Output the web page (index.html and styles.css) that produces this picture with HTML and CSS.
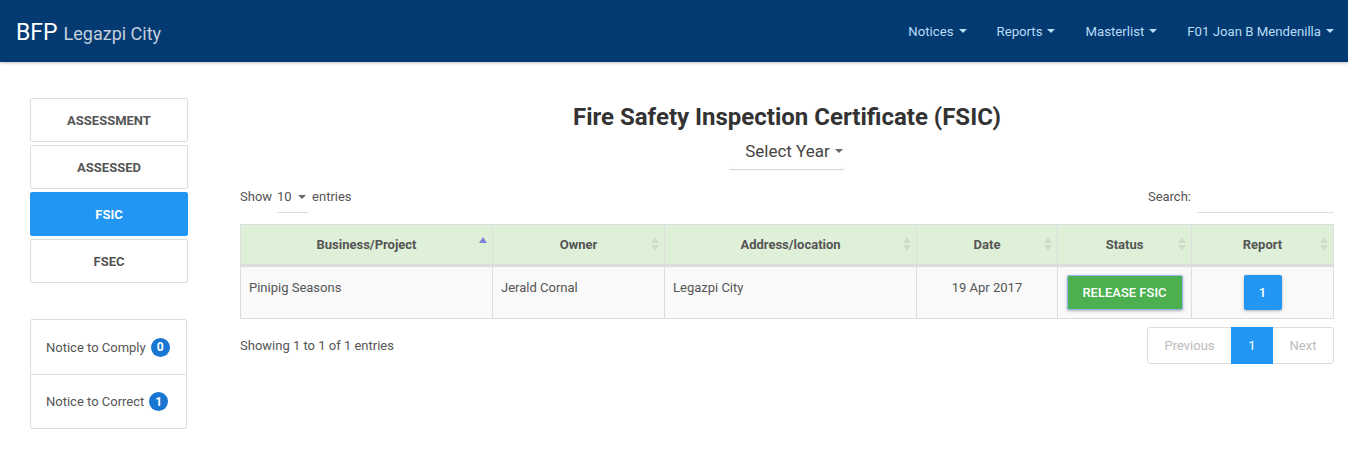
FILE: index.html
```html
<!DOCTYPE html>
<html>
<head>
<meta charset="utf-8">
<link rel="stylesheet" href="styles.css">
</head>
<body>
<nav class="navbar">
  <div class="brand"><span class="brand-main">BFP</span> <span class="brand-sub">Legazpi City</span></div>
  <ul class="nav-menu">
    <li>Notices <span class="caret"></span></li>
    <li>Reports <span class="caret"></span></li>
    <li>Masterlist <span class="caret"></span></li>
    <li>F01 Joan B Mendenilla <span class="caret"></span></li>
  </ul>
</nav>
<div class="layout">
  <aside class="sidebar">
    <div class="tabs">
      <div class="tab">ASSESSMENT</div>
      <div class="tab">ASSESSED</div>
      <div class="tab active">FSIC</div>
      <div class="tab">FSEC</div>
    </div>
    <div class="notices">
      <div class="notice">Notice to Comply <span class="badge">0</span></div>
      <div class="notice">Notice to Correct <span class="badge">1</span></div>
    </div>
  </aside>
  <main class="content">
    <h1 class="title">Fire Safety Inspection Certificate (FSIC)</h1>
    <div class="year-wrap"><div class="year">Select Year <span class="caret dark"></span></div></div>
    <div class="controls">
      <div class="length">Show <span class="select">10 <span class="caret dark small"></span></span> entries</div>
      <div class="search">Search: <span class="search-input"></span></div>
    </div>
    <table class="table">
      <thead>
        <tr>
          <th class="c1">Business/Project<span class="sort asc"></span></th>
          <th class="c2">Owner<span class="sort"></span></th>
          <th class="c3">Address/location<span class="sort"></span></th>
          <th class="c4">Date<span class="sort"></span></th>
          <th class="c5">Status<span class="sort"></span></th>
          <th class="c6">Report<span class="sort"></span></th>
        </tr>
      </thead>
      <tbody>
        <tr>
          <td>Pinipig Seasons</td>
          <td>Jerald Cornal</td>
          <td>Legazpi City</td>
          <td class="center">19 Apr 2017</td>
          <td class="center"><span class="btn green">RELEASE FSIC</span></td>
          <td class="center"><span class="btn blue">1</span></td>
        </tr>
      </tbody>
    </table>
    <div class="footer">
      <div class="info">Showing 1 to 1 of 1 entries</div>
      <div class="pager">
        <span class="pg disabled">Previous</span>
        <span class="pg current">1</span>
        <span class="pg disabled">Next</span>
      </div>
    </div>
  </main>
</div>
</body>
</html>
```
FILE: styles.css
```css
* { box-sizing: border-box; }
body {
  margin: 0;
  font-family: Roboto, "Noto Sans", sans-serif;
  color: #555;
  background: #fff;
}
.navbar {
  height: 62px;
  background: #023a71;
  display: flex;
  align-items: center;
  justify-content: space-between;
  padding: 0 14px 0 16px;
  box-shadow: 0 1px 3px rgba(0,0,0,0.25);
}
.brand { color: #fff; display: flex; align-items: baseline; padding-top: 3px; }
.brand-main { font-size: 23px; }
.brand-sub { font-size: 18px; color: #c5cfdc; margin-left: 6px; }
.nav-menu {
  list-style: none;
  display: flex;
  margin: 0;
  padding: 0;
  gap: 30px;
}
.nav-menu li {
  color: #b9dcf7;
  font-size: 13.2px;
  display: flex;
  align-items: center;
}
.caret {
  display: inline-block;
  width: 0; height: 0;
  border-left: 4px solid transparent;
  border-right: 4px solid transparent;
  border-top: 4px solid currentColor;
  margin-left: 5px;
}
.caret.dark { color: #666; }
.layout {
  display: flex;
  padding: 36px 14px 0 30px;
}
.sidebar { width: 158px; flex: none; }
.tabs { display: flex; flex-direction: column; gap: 3px; }
.tab {
  height: 44px;
  border: 1px solid #ddd;
  border-radius: 2px;
  display: flex;
  align-items: center;
  justify-content: center;
  padding-top: 1px;
  font-size: 13px;
  font-weight: bold;
  color: #555;
}
.tab.active { background: #2196f3; border-color: #2196f3; color: #fff; }
.notices {
  margin-top: 36px;
  width: 157px;
  border: 1px solid #ddd;
  border-radius: 2px;
}
.notice {
  height: 54px;
  display: flex;
  align-items: center;
  padding-left: 15px;
  font-size: 13px;
  color: #555;
}
.notice + .notice { border-top: 1px solid #ddd; }
.badge {
  display: inline-flex;
  align-items: center;
  justify-content: center;
  width: 19px; height: 19px;
  border-radius: 50%;
  background: #1976d2;
  color: #fff;
  font-size: 12px;
  font-weight: bold;
  margin-left: 5px;
}
.content { flex: 1; margin-left: 52px; }
.title {
  margin: 5px 0 0;
  text-align: center;
  font-size: 24px;
  font-weight: bold;
  color: #333;
  height: 29px;
  line-height: 29px;
}
.year-wrap { display: flex; justify-content: center; margin-top: 2px; }
.year {
  font-size: 17px;
  color: #444;
  padding: 7px 3px 8px 17px;
  border-radius: 3px;
  box-shadow: 0 2px 1px -1px rgba(0,0,0,0.18);
  display: flex;
  align-items: center;
}
.controls {
  display: flex;
  justify-content: space-between;
  align-items: flex-start;
  margin-top: 20px;
  font-size: 13px;
}
.length { display: flex; align-items: flex-start; }
.select {
  display: inline-flex;
  align-items: center;
  width: 31px;
  margin: 0 4px 0 5px;
  padding-bottom: 8px;
  border-bottom: 1px solid #ddd;
  font-size: 13px;
}
.select .caret { margin-left: 6px; }
.search { display: flex; align-items: flex-start; }
.search-input {
  display: inline-block;
  width: 137px;
  height: 24px;
  border-bottom: 1px solid #ddd;
  margin-left: 6px;
}
.table {
  width: 100%;
  border-collapse: collapse;
  margin-top: 11px;
  font-size: 13px;
}
.table th, .table td { border: 1px solid #ddd; }
.table th {
  background: #dff0d8;
  color: #555;
  font-weight: bold;
  height: 41px;
  position: relative;
  border-bottom: 3px solid #ddd;
  padding: 0 18px 1px;
}
.c1 { width: 252px; }
.c2 { width: 172px; }
.c3 { width: 252px; }
.c4 { width: 141px; }
.c5 { width: 134px; }
.sort {
  position: absolute;
  right: 5px;
  top: 12px;
  width: 8px;
  height: 14px;
}
.sort::before, .sort::after {
  content: "";
  position: absolute;
  left: 0;
  border-left: 4px solid transparent;
  border-right: 4px solid transparent;
}
.sort::before { top: 0; border-bottom: 6px solid #cfdcc9; }
.sort::after { top: 8px; border-top: 6px solid #cfdcc9; }
.sort.asc::before { border-bottom-color: #7e83d8; }
.sort.asc::after { display: none; }
.table td {
  background: #f9f9f9;
  height: 53px;
  vertical-align: top;
  padding: 13px 8px 0;
  color: #555;
}
.table td.center { text-align: center; padding-top: 8px; }
.table td:nth-child(4) { padding-top: 13px; }
.btn {
  display: inline-flex;
  align-items: center;
  justify-content: center;
  height: 35px;
  color: #fff;
  font-size: 13px;
  font-weight: 500;
  border-radius: 2px;
  box-shadow: 0 1px 3px rgba(0,0,0,0.3);
}
.btn.green { background: #4caf50; width: 116px; border: 1px solid #8fb9ea; }
.btn.blue { background: #2196f3; width: 38px; }
.footer {
  display: flex;
  justify-content: space-between;
  align-items: flex-start;
  margin-top: 8px;
  font-size: 13px;
}
.info { padding-top: 11px; color: #555; }
.pager {
  display: flex;
  border: 1px solid #ddd;
  border-radius: 3px;
  height: 37px;
}
.pg {
  display: flex;
  align-items: center;
  justify-content: center;
  font-size: 13px;
}
.pg.disabled { color: #bbb; }
.pg:first-child { width: 83px; }
.pg.current { width: 42px; background: #2196f3; color: #fff; margin: -1px 0; }
.pg:last-child { width: 60px; }
```
